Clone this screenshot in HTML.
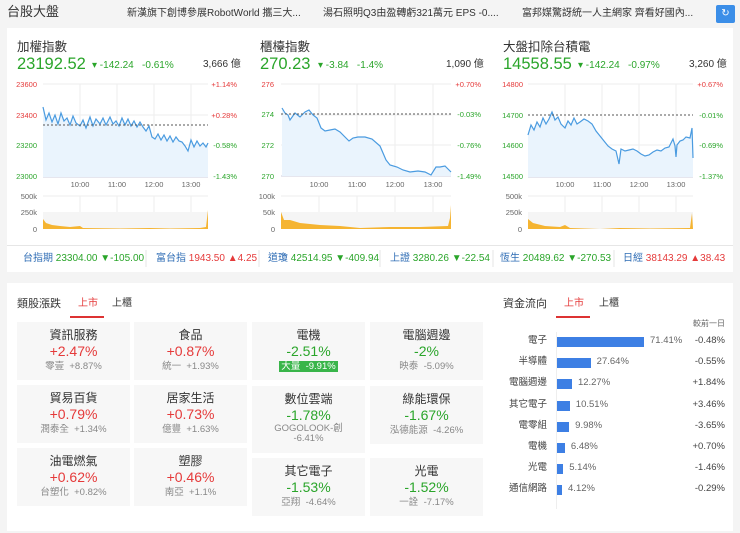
<!DOCTYPE html>
<html><head><meta charset="utf-8">
<style>
*{margin:0;padding:0;box-sizing:border-box}
body{width:740px;height:533px;background:#f4f4f4;font-family:"Liberation Sans","Noto Sans CJK TC",sans-serif;position:relative;overflow:hidden;color:#333}
.a{position:absolute;white-space:nowrap;line-height:1.15}
.g{color:#2aa52a}.r{color:#e53a3a}
.panel{position:absolute;background:#fff}
.t{font-size:12.5px;color:#333;line-height:1}
.big{font-size:16.5px;line-height:1}
.sm{font-size:10px}
.xs{font-size:8px}
.tile{position:absolute;background:#f7f7f7;text-align:center;width:113px}
.tile .n{font-size:12px;color:#333;margin-top:6px;line-height:15px}
.tile .p{font-size:14px;line-height:17px}
.tile .s{font-size:9.5px;color:#888;line-height:13px}
.ff{font-size:9.5px;color:#444}
</style></head><body>
<div class="a" style="left:7px;top:5px;font-size:13px;color:#333">台股大盤</div>
<div class="a" style="left:127px;top:8px;font-size:10px;color:#333">新漢旗下創博參展RobotWorld 攜三大...</div>
<div class="a" style="left:323px;top:8px;font-size:10px;color:#333">湯石照明Q3由盈轉虧321萬元 EPS -0....</div>
<div class="a" style="left:522px;top:8px;font-size:10px;color:#333">富邦媒驚訝統一人主網家 齊看好國內...</div>
<div class="a" style="left:716px;top:5px;width:19px;height:18px;background:#3b8ee8;border-radius:2px;color:#fff;font-size:10px;text-align:center;line-height:18px">↻</div>

<div class="panel" style="left:7px;top:28px;width:726px;height:244px"></div>
<div class="a" style="left:7px;top:245px;width:726px;height:1px;background:#e6e6e6"></div>

<div class="a t" style="left:17px;top:41px">加權指數</div>
<div class="a big g" style="left:17px;top:56px">23192.52</div>
<div class="a sm g" style="left:92px;top:60px">▾ -142.24 &nbsp;&nbsp;-0.61%</div>
<div class="a sm" style="left:203px;top:59px">3,666 億</div>

<div class="a t" style="left:260px;top:41px">櫃檯指數</div>
<div class="a big g" style="left:260px;top:56px">270.23</div>
<div class="a sm g" style="left:318px;top:60px">▾ -3.84 &nbsp;&nbsp;-1.4%</div>
<div class="a sm" style="left:446px;top:59px">1,090 億</div>

<div class="a t" style="left:503px;top:41px">大盤扣除台積電</div>
<div class="a big g" style="left:503px;top:56px">14558.55</div>
<div class="a sm g" style="left:578px;top:60px">▾ -142.24 &nbsp;&nbsp;-0.97%</div>
<div class="a sm" style="left:689px;top:59px">3,260 億</div>

<svg class="a" style="left:0;top:0" width="740" height="280" font-family="Liberation Sans" font-size="7.5">
<g stroke="#eee" stroke-width="1">
<line x1="43" y1="84" x2="208" y2="84"/><line x1="43" y1="115" x2="208" y2="115"/><line x1="43" y1="145" x2="208" y2="145"/>
<line x1="80" y1="84" x2="80" y2="177"/><line x1="117" y1="84" x2="117" y2="177"/><line x1="154" y1="84" x2="154" y2="177"/><line x1="191" y1="84" x2="191" y2="177"/>
<line x1="281" y1="84" x2="451" y2="84"/><line x1="281" y1="115" x2="451" y2="115"/><line x1="281" y1="145" x2="451" y2="145"/>
<line x1="319" y1="84" x2="319" y2="176"/><line x1="357" y1="84" x2="357" y2="176"/><line x1="395" y1="84" x2="395" y2="176"/><line x1="433" y1="84" x2="433" y2="176"/>
<line x1="528" y1="84" x2="693" y2="84"/><line x1="528" y1="145" x2="693" y2="145"/>
<line x1="565" y1="84" x2="565" y2="177"/><line x1="602" y1="84" x2="602" y2="177"/><line x1="639" y1="84" x2="639" y2="177"/><line x1="676" y1="84" x2="676" y2="177"/>
<line x1="43" y1="196" x2="208" y2="196"/><line x1="281" y1="196" x2="451" y2="196"/><line x1="528" y1="196" x2="693" y2="196"/>
<line x1="80" y1="196" x2="80" y2="229"/><line x1="117" y1="196" x2="117" y2="229"/><line x1="154" y1="196" x2="154" y2="229"/><line x1="191" y1="196" x2="191" y2="229"/>
<line x1="319" y1="196" x2="319" y2="229"/><line x1="357" y1="196" x2="357" y2="229"/><line x1="395" y1="196" x2="395" y2="229"/><line x1="433" y1="196" x2="433" y2="229"/>
<line x1="565" y1="196" x2="565" y2="229"/><line x1="602" y1="196" x2="602" y2="229"/><line x1="639" y1="196" x2="639" y2="229"/><line x1="676" y1="196" x2="676" y2="229"/>
</g>
<rect x="43" y="212" width="165" height="17" fill="#f5f5f5"/>
<rect x="281" y="212" width="170" height="17" fill="#f5f5f5"/>
<rect x="528" y="212" width="165" height="17" fill="#f5f5f5"/>
<g stroke="#ccd" stroke-width="1"><line x1="43" y1="177" x2="208" y2="177"/><line x1="281" y1="176" x2="451" y2="176"/><line x1="528" y1="177" x2="693" y2="177"/></g>
<polygon fill="#eaf4fd" points="43,107 46,120 49,113 52,122 55,115 58,124 61,113 64,121 67,118 70,125 73,116 76,123 80,126 83,120 86,128 90,117 93,126 96,119 100,124 103,118 106,125 110,117 113,124 116,121 119,126 122,118 125,125 128,119 131,126 134,121 137,127 140,122 143,127 146,131 149,126 152,137 155,139 158,134 161,140 164,135 167,141 170,136 173,142 176,137 179,141 182,142 185,146 188,151 191,140 194,147 197,141 200,146 203,143 206,147 208,143 208,177 43,177"/>
<polyline fill="none" stroke="#4a9be0" stroke-width="1.2" points="43,107 46,120 49,113 52,122 55,115 58,124 61,113 64,121 67,118 70,125 73,116 76,123 80,126 83,120 86,128 90,117 93,126 96,119 100,124 103,118 106,125 110,117 113,124 116,121 119,126 122,118 125,125 128,119 131,126 134,121 137,127 140,122 143,127 146,131 149,126 152,137 155,139 158,134 161,140 164,135 167,141 170,136 173,142 176,137 179,141 182,142 185,146 188,151 191,140 194,147 197,141 200,146 203,143 206,147 208,143"/>
<line x1="43" y1="125" x2="208" y2="125" stroke="#555" stroke-dasharray="2,2"/>
<polygon fill="#eaf4fd" points="282,108 285,113 288,115 290,120 295,113 300,117 305,112 309,110 313,115 317,118 321,128 325,131 330,130 335,129 340,132 345,137 349,141 353,138 358,137 365,137 372,139 380,146 386,160 390,165 397,167 403,170 410,172 418,171 425,172 431,175 436,167 440,167 445,166 451,172 451,176 282,176"/>
<polyline fill="none" stroke="#4a9be0" stroke-width="1.2" points="282,108 285,113 288,115 290,120 295,113 300,117 305,112 309,110 313,115 317,118 321,128 325,131 330,130 335,129 340,132 345,137 349,141 353,138 358,137 365,137 372,139 380,146 386,160 390,165 397,167 403,170 410,172 418,171 425,172 431,175 436,167 440,167 445,166 451,172"/>
<line x1="281" y1="114" x2="451" y2="114" stroke="#555" stroke-dasharray="2,2"/>
<polygon fill="#eaf4fd" points="528,135 531,125 534,130 537,122 540,127 543,118 546,124 549,119 552,112 555,120 558,117 561,124 565,128 568,121 571,125 574,118 577,124 580,122 584,119 588,121 592,124 596,131 600,136 604,141 608,146 612,149 616,151 619,164 621,149 625,151 629,150 633,149 637,151 641,154 645,156 649,155 653,152 657,150 661,151 665,148 669,147 673,139 675,146 676,157 677,145 680,141 683,140 686,137 690,138 692,128 693,158 693,177 528,177"/>
<polyline fill="none" stroke="#4a9be0" stroke-width="1.2" points="528,135 531,125 534,130 537,122 540,127 543,118 546,124 549,119 552,112 555,120 558,117 561,124 565,128 568,121 571,125 574,118 577,124 580,122 584,119 588,121 592,124 596,131 600,136 604,141 608,146 612,149 616,151 619,164 621,149 625,151 629,150 633,149 637,151 641,154 645,156 649,155 653,152 657,150 661,151 665,148 669,147 673,139 675,146 676,157 677,145 680,141 683,140 686,137 690,138 692,128 693,158"/>
<line x1="528" y1="115" x2="693" y2="115" stroke="#555" stroke-dasharray="2,2"/>
<polygon fill="#f5b431" points="43,229 43,219 46,223 52,225 60,226 70,227 80,226 83,228 120,228.5 150,228 170,228.5 200,228 206,227 208,210 208,229"/>
<polygon fill="#f5b431" points="281,229 281,212 284,220 290,220 300,223 320,225 340,226 360,228 390,227 420,227 448,226 450,218 451,205 451,229"/>
<polygon fill="#f5b431" points="528,229 528,219 533,223 545,226 560,227 565,225 570,228 600,229 620,228 650,228.5 690,228 692,213 693,229"/>
<g fill="#e53a3a" text-anchor="end"><text x="37" y="87">23600</text><text x="237" y="87">+1.14%</text><text x="274" y="87">276</text><text x="481" y="87">+0.70%</text><text x="523" y="87">14800</text><text x="723" y="87">+0.67%</text><text x="237" y="118">+0.28%</text><text x="37" y="118">23400</text></g>
<g fill="#2aa52a" text-anchor="end"><text x="37" y="148">23200</text><text x="37" y="179">23000</text><text x="237" y="148">-0.58%</text><text x="237" y="179">-1.43%</text>
<text x="274" y="117">274</text><text x="274" y="148">272</text><text x="274" y="179">270</text><text x="481" y="117">-0.03%</text><text x="481" y="148">-0.76%</text><text x="481" y="179">-1.49%</text>
<text x="523" y="118">14700</text><text x="523" y="148">14600</text><text x="523" y="179">14500</text><text x="723" y="118">-0.01%</text><text x="723" y="148">-0.69%</text><text x="723" y="179">-1.37%</text></g>
<g fill="#666" text-anchor="middle"><text x="80" y="187">10:00</text><text x="117" y="187">11:00</text><text x="154" y="187">12:00</text><text x="191" y="187">13:00</text>
<text x="319" y="187">10:00</text><text x="357" y="187">11:00</text><text x="395" y="187">12:00</text><text x="433" y="187">13:00</text>
<text x="565" y="187">10:00</text><text x="602" y="187">11:00</text><text x="639" y="187">12:00</text><text x="676" y="187">13:00</text></g>
<g fill="#666" text-anchor="end"><text x="37" y="199">500k</text><text x="37" y="215">250k</text><text x="37" y="232">0</text>
<text x="275" y="199">100k</text><text x="275" y="215">50k</text><text x="275" y="232">0</text>
<text x="522" y="199">500k</text><text x="522" y="215">250k</text><text x="522" y="232">0</text></g>
<g stroke="#e6e6e6"><line x1="146" y1="250" x2="146" y2="267"/><line x1="259" y1="250" x2="259" y2="267"/><line x1="380" y1="250" x2="380" y2="267"/><line x1="493" y1="250" x2="493" y2="267"/><line x1="614" y1="250" x2="614" y2="267"/></g>
</svg>
<div class="a sm" style="left:23px;top:253px"><span style="color:#2f6db5">台指期</span> <span class="g">23304.00 ▼-105.00</span></div>
<div class="a sm" style="left:156px;top:253px"><span style="color:#2f6db5">富台指</span> <span class="r">1943.50 ▲4.25</span></div>
<div class="a sm" style="left:268px;top:253px"><span style="color:#2f6db5">道瓊</span> <span class="g">42514.95 ▼-409.94</span></div>
<div class="a sm" style="left:390px;top:253px"><span style="color:#2f6db5">上證</span> <span class="g">3280.26 ▼-22.54</span></div>
<div class="a sm" style="left:500px;top:253px"><span style="color:#2f6db5">恆生</span> <span class="g">20489.62 ▼-270.53</span></div>
<div class="a sm" style="left:623px;top:253px"><span style="color:#2f6db5">日經</span> <span class="r">38143.29 ▲38.43</span></div>

<div class="panel" style="left:7px;top:283px;width:726px;height:248px"></div>
<div class="a" style="left:17px;top:298px;font-size:11px">類股漲跌</div>
<div class="a" style="left:78px;top:298px;font-size:10px;color:#e53a3a">上市</div>
<div class="a" style="left:70px;top:316px;width:34px;height:2px;background:#d33"></div>
<div class="a" style="left:112px;top:298px;font-size:10px">上櫃</div>

<div class="tile" style="left:17px;top:322px;height:58px"><div class="n">資訊服務</div><div class="p r">+2.47%</div><div class="s">零壹 &nbsp;+8.87%</div></div>
<div class="tile" style="left:134px;top:322px;height:58px"><div class="n">食品</div><div class="p r">+0.87%</div><div class="s">統一 &nbsp;+1.93%</div></div>
<div class="tile" style="left:252px;top:322px;height:58px"><div class="n">電機</div><div class="p g">-2.51%</div><div class="s"><span style="background:#39b54a;color:#fff;padding:0 2px">大量 &nbsp;-9.91%</span></div></div>
<div class="tile" style="left:370px;top:322px;height:58px"><div class="n">電腦週邊</div><div class="p g">-2%</div><div class="s">映泰 &nbsp;-5.09%</div></div>

<div class="tile" style="left:17px;top:385px;height:58px"><div class="n">貿易百貨</div><div class="p r">+0.79%</div><div class="s">潤泰全 &nbsp;+1.34%</div></div>
<div class="tile" style="left:134px;top:385px;height:58px"><div class="n">居家生活</div><div class="p r">+0.73%</div><div class="s">億豐 &nbsp;+1.63%</div></div>
<div class="tile" style="left:252px;top:386px;height:67px"><div class="n">數位雲端</div><div class="p g">-1.78%</div><div class="s" style="line-height:10px">GOGOLOOK-創<br>-6.41%</div></div>
<div class="tile" style="left:370px;top:386px;height:58px"><div class="n">綠能環保</div><div class="p g">-1.67%</div><div class="s">泓德能源 &nbsp;-4.26%</div></div>

<div class="tile" style="left:17px;top:448px;height:58px"><div class="n">油電燃氣</div><div class="p r">+0.62%</div><div class="s">台塑化 &nbsp;+0.82%</div></div>
<div class="tile" style="left:134px;top:448px;height:58px"><div class="n">塑膠</div><div class="p r">+0.46%</div><div class="s">南亞 &nbsp;+1.1%</div></div>
<div class="tile" style="left:252px;top:458px;height:58px"><div class="n">其它電子</div><div class="p g">-1.53%</div><div class="s">亞翔 &nbsp;-4.64%</div></div>
<div class="tile" style="left:370px;top:458px;height:58px"><div class="n">光電</div><div class="p g">-1.52%</div><div class="s">一詮 &nbsp;-7.17%</div></div>

<div class="a" style="left:503px;top:298px;font-size:11px">資金流向</div>
<div class="a" style="left:564px;top:298px;font-size:10px;color:#e53a3a">上市</div>
<div class="a" style="left:556px;top:316px;width:34px;height:2px;background:#d33"></div>
<div class="a" style="left:599px;top:298px;font-size:10px">上櫃</div>
<div class="a xs" style="left:693px;top:319px;color:#666">較前一日</div>
<div class="a" style="left:556px;top:332px;width:1px;height:177px;background:#eee"></div>
<div id="ff"></div>
<script>
var d=[["電子",71.41,"-0.48%",0],["半導體",27.64,"-0.55%",0],["電腦週邊",12.27,"+1.84%",1],["其它電子",10.51,"+3.46%",1],["電零組",9.98,"-3.65%",0],["電機",6.48,"+0.70%",1],["光電",5.14,"-1.46%",0],["通信網路",4.12,"-0.29%",0]];
var h="";d.forEach(function(r,i){var y=336+i*21.2;var w=r[1]/71.41*87;
h+='<div class="a ff" style="left:497px;width:50px;text-align:right;top:'+y+'px">'+r[0]+'</div>';
h+='<div class="a" style="left:557px;top:'+(y+1)+'px;width:'+w+'px;height:10px;background:#3d7fe4"></div>';
h+='<div class="a ff" style="color:#666;left:'+(560+w+3)+'px;top:'+y+'px">'+r[1].toFixed(2)+'%</div>';
h+='<div class="a ff '+(r[3]?'r':'g')+'" style="left:680px;width:45px;text-align:right;top:'+y+'px">'+r[2]+'</div>';});
document.getElementById("ff").innerHTML=h;
</script>
</body></html>
